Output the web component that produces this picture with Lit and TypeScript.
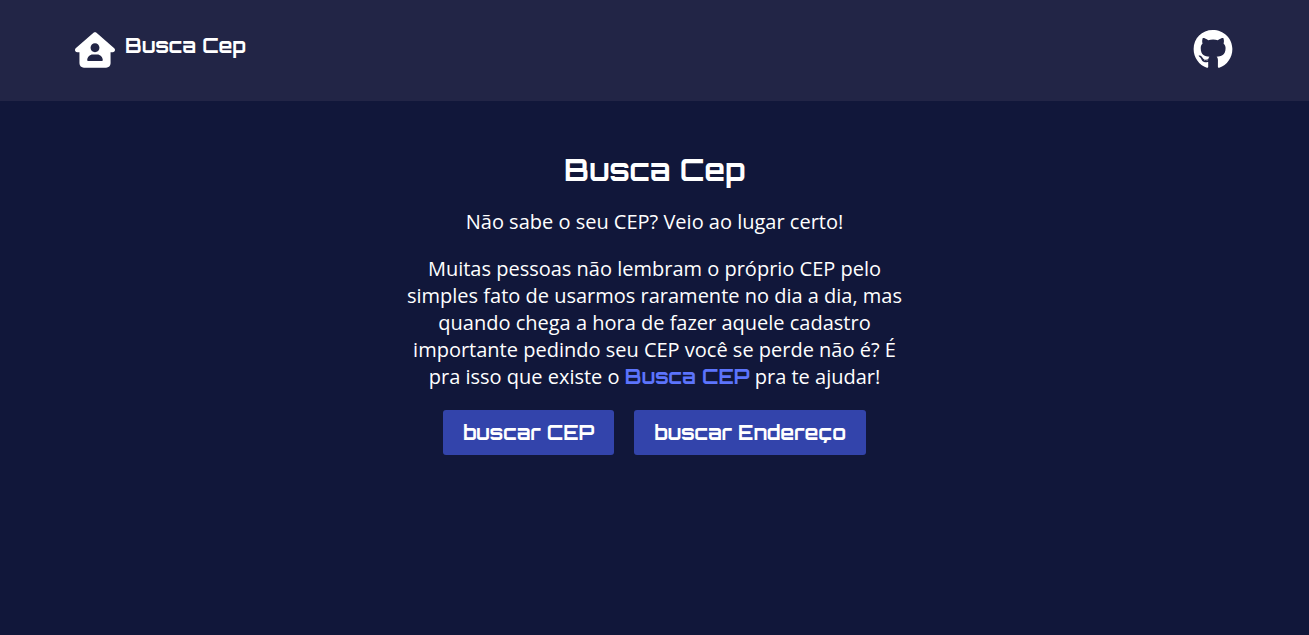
import { LitElement, html, css } from "lit";
import { customElement } from "lit/decorators.js";

@customElement("app-root")
export class AppRoot extends LitElement {
  static styles = css`
    :host {
      --display: Orbitron, "DejaVu Sans", sans-serif;
      display: block;
      min-height: 100vh;
      background: #11173a;
      color: #fff;
      font: 20px/27px "Open Sans", sans-serif;
    }
    * {
      box-sizing: border-box;
    }
    a {
      color: inherit;
      text-decoration: none;
    }
    header {
      display: flex;
      justify-content: space-between;
      align-items: flex-start;
      padding: 30px 76px 31px 75px;
      background: #222546;
    }
    .brand {
      display: flex;
      gap: 10px;
      font: bold 20px/31px var(--display);
    }
    .icon {
      display: block;
      width: 40px;
      height: 40px;
      fill: currentColor;
    }
    main {
      display: flex;
      flex-direction: column;
      align-items: center;
      gap: 20px;
      max-width: 540px;
      margin: 0 auto;
      padding: 50px 20px;
      text-align: center;
    }
    h1,
    p {
      margin: 0;
    }
    h1 {
      font: bold 30px/37px var(--display);
    }
    .highlight {
      color: #5c74fc;
      font: bold 20px/20px var(--display);
    }
    .actions {
      display: flex;
      flex-wrap: wrap;
      justify-content: center;
      gap: 20px;
    }
    button {
      padding: 10px 20px;
      border: 0;
      border-radius: 3px;
      background: #3344ab;
      color: inherit;
      font: bold 20px/25px var(--display);
      cursor: pointer;
    }
  `;

  render() {
    return html`
      <header>
        <a class="brand" href="#">
          <svg class="icon" viewBox="0 0 576 512" aria-hidden="true">
            <path
              d="M511.8 287.6L512.5 447.7C512.6 483.2 483.9 512 448.5 512H128.1C92.75 512 64.09 483.3 64.09 448V287.6H32.05C14.02 287.6 0 273.5 0 255.5C0 246.5 3.004 238.5 10.01 231.5L266.4 8.016C273.4 1.002 281.4 0 288.4 0C295.4 0 303.4 2.004 309.5 7.014L564.8 231.5C572.8 238.5 576.9 246.5 575.8 255.5C575.8 273.5 560.8 287.6 543.8 287.6L511.8 287.6zM288 288C323.3 288 352 259.3 352 224C352 188.7 323.3 160 288 160C252.7 160 224 188.7 224 224C224 259.3 252.7 288 288 288zM256 320C211.8 320 176 355.8 176 400C176 408.8 183.2 416 192 416H384C392.8 416 400 408.8 400 400C400 355.8 364.2 320 320 320H256z"
            ></path>
          </svg>
          <span>Busca Cep</span>
        </a>
        <a href="#" aria-label="GitHub">
          <svg class="icon" viewBox="0 8 496 512" aria-hidden="true">
            <path
              d="M165.9 397.4c0 2-2.3 3.6-5.2 3.6-3.3.3-5.6-1.3-5.6-3.6 0-2 2.3-3.6 5.2-3.6 3-.3 5.6 1.3 5.6 3.6zm-31.1-4.5c-.7 2 1.3 4.3 4.3 4.9 2.6 1 5.6 0 6.2-2s-1.3-4.3-4.3-5.2c-2.6-.7-5.5.3-6.2 2.3zm44.2-1.7c-2.9.7-4.9 2.6-4.6 4.9.3 2 2.9 3.3 5.9 2.6 2.9-.7 4.9-2.6 4.6-4.6-.3-1.9-3-3.2-5.9-2.9zM244.8 8C106.1 8 0 113.3 0 252c0 110.9 69.8 205.8 169.5 239.2 12.8 2.3 17.3-5.6 17.3-12.1 0-6.2-.3-40.4-.3-61.4 0 0-70 15-84.7-29.8 0 0-11.4-29.1-27.8-36.6 0 0-22.9-15.7 1.6-15.4 0 0 24.9 2 38.6 25.8 21.9 38.6 58.6 27.5 72.9 20.9 2.3-16 8.8-27.1 16-33.7-55.9-6.2-112.3-14.3-112.3-110.5 0-27.5 7.6-41.3 23.6-58.9-2.6-6.5-11.1-33.3 2.6-67.9 20.9-6.5 69 27 69 27 20-5.6 41.5-8.5 62.8-8.5s42.8 2.9 62.8 8.5c0 0 48.1-33.6 69-27 13.7 34.7 5.2 61.4 2.6 67.9 16 17.7 25.8 31.5 25.8 58.9 0 96.5-58.9 104.2-114.8 110.5 9.2 7.9 17 22.9 17 46.4 0 33.7-.3 75.4-.3 83.6 0 6.5 4.6 14.4 17.3 12.1C428.2 457.8 496 362.9 496 252 496 113.3 383.5 8 244.8 8z"
            ></path>
          </svg>
        </a>
      </header>
      <main>
        <h1>Busca Cep</h1>
        <p>Não sabe o seu CEP? Veio ao lugar certo!</p>
        <p>
          Muitas pessoas não lembram o próprio CEP pelo simples fato de usarmos
          raramente no dia a dia, mas quando chega a hora de fazer aquele
          cadastro importante pedindo seu CEP você se perde não é? É pra isso
          que existe o <span class="highlight">Busca CEP</span> pra te ajudar!
        </p>
        <div class="actions">
          <button type="button">buscar CEP</button>
          <button type="button">buscar Endereço</button>
        </div>
      </main>
    `;
  }
}
